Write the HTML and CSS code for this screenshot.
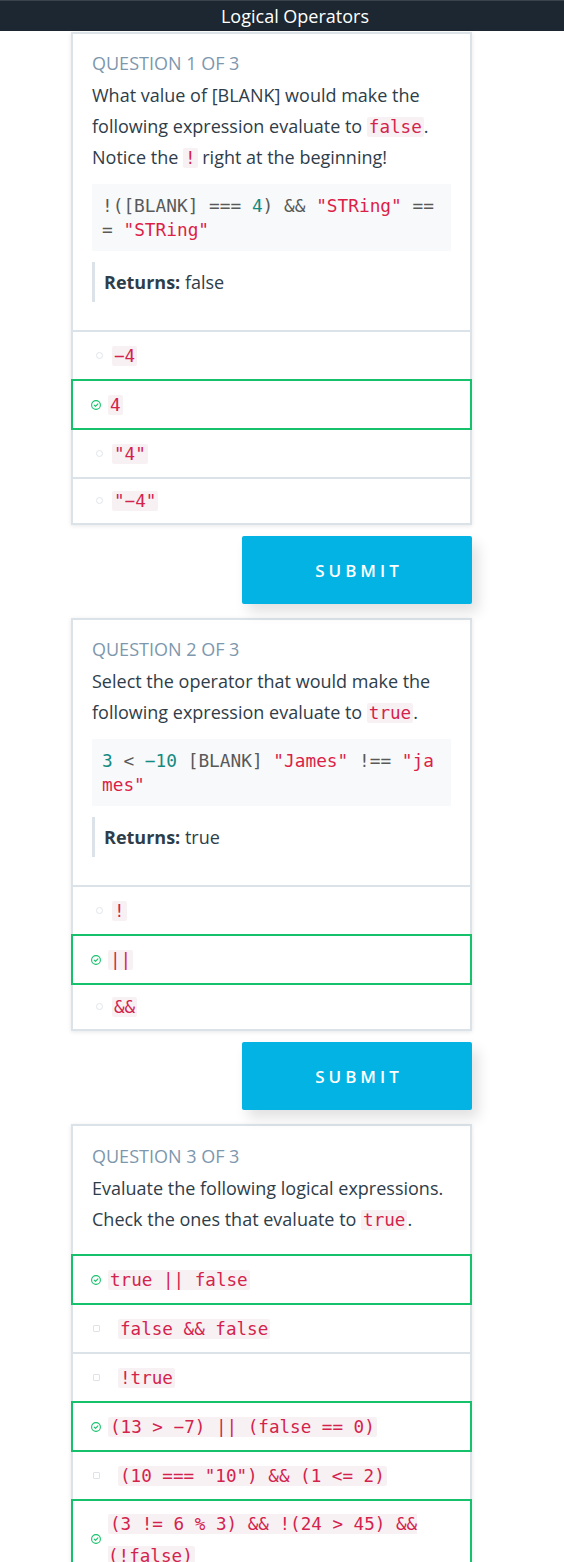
FILE: index.html
```html
<!DOCTYPE html>
<html lang="en">
<head>
<meta charset="utf-8">
<title>Logical Operators</title>
<link rel="stylesheet" href="styles.css">
</head>
<body>
<header class="topbar">Logical Operators</header>
<main class="quiz">

  <section class="card">
    <div class="card-body">
      <div class="q-label">Question 1 of 3</div>
      <p class="q-text">What value of [BLANK] would make the following expression evaluate to <code class="ic">false</code>. Notice the <code class="ic">!</code> right at the beginning!</p>
      <pre class="code-block"><span class="c-op">!([BLANK] === </span><span class="c-num">4</span><span class="c-op">) &amp;&amp; </span><span class="c-str">"STRing"</span><span class="c-op"> === </span><span class="c-str">"STRing"</span></pre>
      <blockquote class="returns"><strong>Returns:</strong> false</blockquote>
    </div>
    <ul class="options">
      <li class="option"><span class="mark radio"></span><span class="opt-text"><code class="ic">−4</code></span></li>
      <li class="option selected"><span class="mark check"><svg viewBox="0 0 10 10" width="10" height="10"><circle cx="5" cy="5" r="4.4" fill="none" stroke="#15c26b" stroke-width="1.1"/><path d="M3.2 5.2 L4.5 6.4 L6.9 3.8" fill="none" stroke="#15c26b" stroke-width="1.1" stroke-linecap="round" stroke-linejoin="round"/></svg></span><span class="opt-text"><code class="ic">4</code></span></li>
      <li class="option"><span class="mark radio"></span><span class="opt-text"><code class="ic">"4"</code></span></li>
      <li class="option"><span class="mark radio"></span><span class="opt-text"><code class="ic">"−4"</code></span></li>
    </ul>
  </section>
  <div class="submit-row"><button class="submit" type="button">Submit</button></div>

  <section class="card">
    <div class="card-body">
      <div class="q-label">Question 2 of 3</div>
      <p class="q-text">Select the operator that would make the following expression evaluate to <code class="ic">true</code>.</p>
      <pre class="code-block"><span class="c-num">3</span><span class="c-op"> &lt; </span><span class="c-num">−10</span><span class="c-op"> [BLANK] </span><span class="c-str">"James"</span><span class="c-op"> !== </span><span class="c-str">"james"</span></pre>
      <blockquote class="returns"><strong>Returns:</strong> true</blockquote>
    </div>
    <ul class="options">
      <li class="option"><span class="mark radio"></span><span class="opt-text"><code class="ic">!</code></span></li>
      <li class="option selected"><span class="mark check"><svg viewBox="0 0 10 10" width="10" height="10"><circle cx="5" cy="5" r="4.4" fill="none" stroke="#15c26b" stroke-width="1.1"/><path d="M3.2 5.2 L4.5 6.4 L6.9 3.8" fill="none" stroke="#15c26b" stroke-width="1.1" stroke-linecap="round" stroke-linejoin="round"/></svg></span><span class="opt-text"><code class="ic">||</code></span></li>
      <li class="option"><span class="mark radio"></span><span class="opt-text"><code class="ic">&amp;&amp;</code></span></li>
    </ul>
  </section>
  <div class="submit-row"><button class="submit" type="button">Submit</button></div>

  <section class="card">
    <div class="card-body card-body-plain">
      <div class="q-label">Question 3 of 3</div>
      <p class="q-text">Evaluate the following logical expressions. Check the ones that evaluate to <code class="ic">true</code>.</p>
    </div>
    <ul class="options">
      <li class="option selected"><span class="mark check"><svg viewBox="0 0 10 10" width="10" height="10"><circle cx="5" cy="5" r="4.4" fill="none" stroke="#15c26b" stroke-width="1.1"/><path d="M3.2 5.2 L4.5 6.4 L6.9 3.8" fill="none" stroke="#15c26b" stroke-width="1.1" stroke-linecap="round" stroke-linejoin="round"/></svg></span><span class="opt-text"><code class="ic">true || false</code></span></li>
      <li class="option"><span class="mark box"></span><span class="opt-text"><code class="ic">false &amp;&amp; false</code></span></li>
      <li class="option"><span class="mark box"></span><span class="opt-text"><code class="ic">!true</code></span></li>
      <li class="option selected"><span class="mark check"><svg viewBox="0 0 10 10" width="10" height="10"><circle cx="5" cy="5" r="4.4" fill="none" stroke="#15c26b" stroke-width="1.1"/><path d="M3.2 5.2 L4.5 6.4 L6.9 3.8" fill="none" stroke="#15c26b" stroke-width="1.1" stroke-linecap="round" stroke-linejoin="round"/></svg></span><span class="opt-text"><code class="ic">(13 &gt; −7) || (false == 0)</code></span></li>
      <li class="option"><span class="mark box"></span><span class="opt-text"><code class="ic">(10 === "10") &amp;&amp; (1 &lt;= 2)</code></span></li>
      <li class="option option-tall selected"><span class="mark check"><svg viewBox="0 0 10 10" width="10" height="10"><circle cx="5" cy="5" r="4.4" fill="none" stroke="#15c26b" stroke-width="1.1"/><path d="M3.2 5.2 L4.5 6.4 L6.9 3.8" fill="none" stroke="#15c26b" stroke-width="1.1" stroke-linecap="round" stroke-linejoin="round"/></svg></span><span class="opt-text"><code class="ic">(3 != 6 % 3) &amp;&amp; !(24 &gt; 45) &amp;&amp; (!false)</code></span></li>
    </ul>
  </section>

</main>
</body>
</html>
```

FILE: styles.css
```css
* { box-sizing: border-box; }

html, body {
  margin: 0;
  padding: 0;
  background: #ffffff;
}

body {
  font-family: "Open Sans", "Noto Sans", sans-serif;
  color: #2e3d49;
  font-size: 18px;
}

.topbar {
  height: 31px;
  background: #1d2731;
  border-top: 1px solid #3a434c;
  color: #ffffff;
  font-size: 18px;
  line-height: 30px;
  text-align: center;
  padding-left: 26px;
}

.quiz {
  margin-left: 71px;
  width: 401px;
  padding-top: 1px;
}

.card {
  background: #fff;
  box-shadow: 0 1px 4px rgba(46, 61, 73, 0.12);
}

.card-body {
  border: 2px solid #dbe2e8;
  padding: 17px 19px 18px 19px;
}

.card-body-plain {
  padding-top: 18px;
  padding-bottom: 19px;
}

.q-label {
  text-transform: uppercase;
  color: #7d97ad;
  font-size: 18px;
  line-height: 24px;
  margin-bottom: 5px;
}

.q-text {
  margin: 0;
  font-size: 18px;
  line-height: 31px;
}

code, pre {
  font-family: "DejaVu Sans Mono", "Liberation Mono", monospace;
}

.ic {
  font-size: 17.6px;
  line-height: 20px;
  color: #d3234d;
  background: #f8f1f3;
  padding: 0 2px;
  border-radius: 2px;
}

.code-block {
  margin: 11px 0 0 0;
  background: #f8f9fa;
  padding: 10px 10px 9px 10px;
  font-size: 17.8px;
  line-height: 24px;
  white-space: pre-wrap;
  word-break: break-all;
  color: #595959;
}

.c-num { color: #138a80; }
.c-str { color: #dc1f47; }
.c-op { color: #595959; }

.returns {
  margin: 11px 0 10px 0;
  border-left: 3px solid #dbe2e8;
  padding: 8px 0 8px 9px;
  font-size: 18px;
  line-height: 24px;
}

.returns strong { font-weight: 700; }

.options {
  list-style: none;
  margin: 0;
  padding: 0;
}

.option {
  position: relative;
  display: flex;
  align-items: center;
  margin-top: -2px;
  border: 2px solid #dbe2e8;
  padding: 8px 18px 8px 18px;
  min-height: 51px;
  line-height: 31px;
}

.option:last-child {
  min-height: 48px;
  padding-top: 6px;
  padding-bottom: 7px;
}

.option-tall {
  line-height: 32px;
}

.option.selected {
  border-color: #15c26b;
  z-index: 1;
}

.mark {
  flex: none;
  display: block;
}

.mark.radio {
  width: 7px;
  height: 7px;
  margin-left: 5px;
  margin-right: 9px;
  border: 1px solid #e1e6ea;
  border-radius: 50%;
}

.mark.check {
  width: 10px;
  height: 10px;
  margin-right: 7px;
}

.mark.check svg { display: block; }

.mark.box {
  width: 7px;
  height: 7px;
  margin-left: 2px;
  margin-right: 18px;
  border: 1px solid #dfe3e7;
  border-radius: 1px;
}

.opt-text {
  flex: 1;
}

.submit-row {
  display: flex;
  justify-content: flex-end;
  padding: 11px 0 14px 0;
}

.submit {
  width: 230px;
  height: 68px;
  border: none;
  border-radius: 2px;
  background: #02b3e4;
  color: #ffffff;
  font-family: "Open Sans", "Noto Sans", sans-serif;
  font-size: 17px;
  font-weight: 600;
  letter-spacing: 4px;
  text-transform: uppercase;
  box-shadow: 6px 8px 14px rgba(0, 0, 0, 0.12);
  padding: 0 0 0 4px;
}
```
